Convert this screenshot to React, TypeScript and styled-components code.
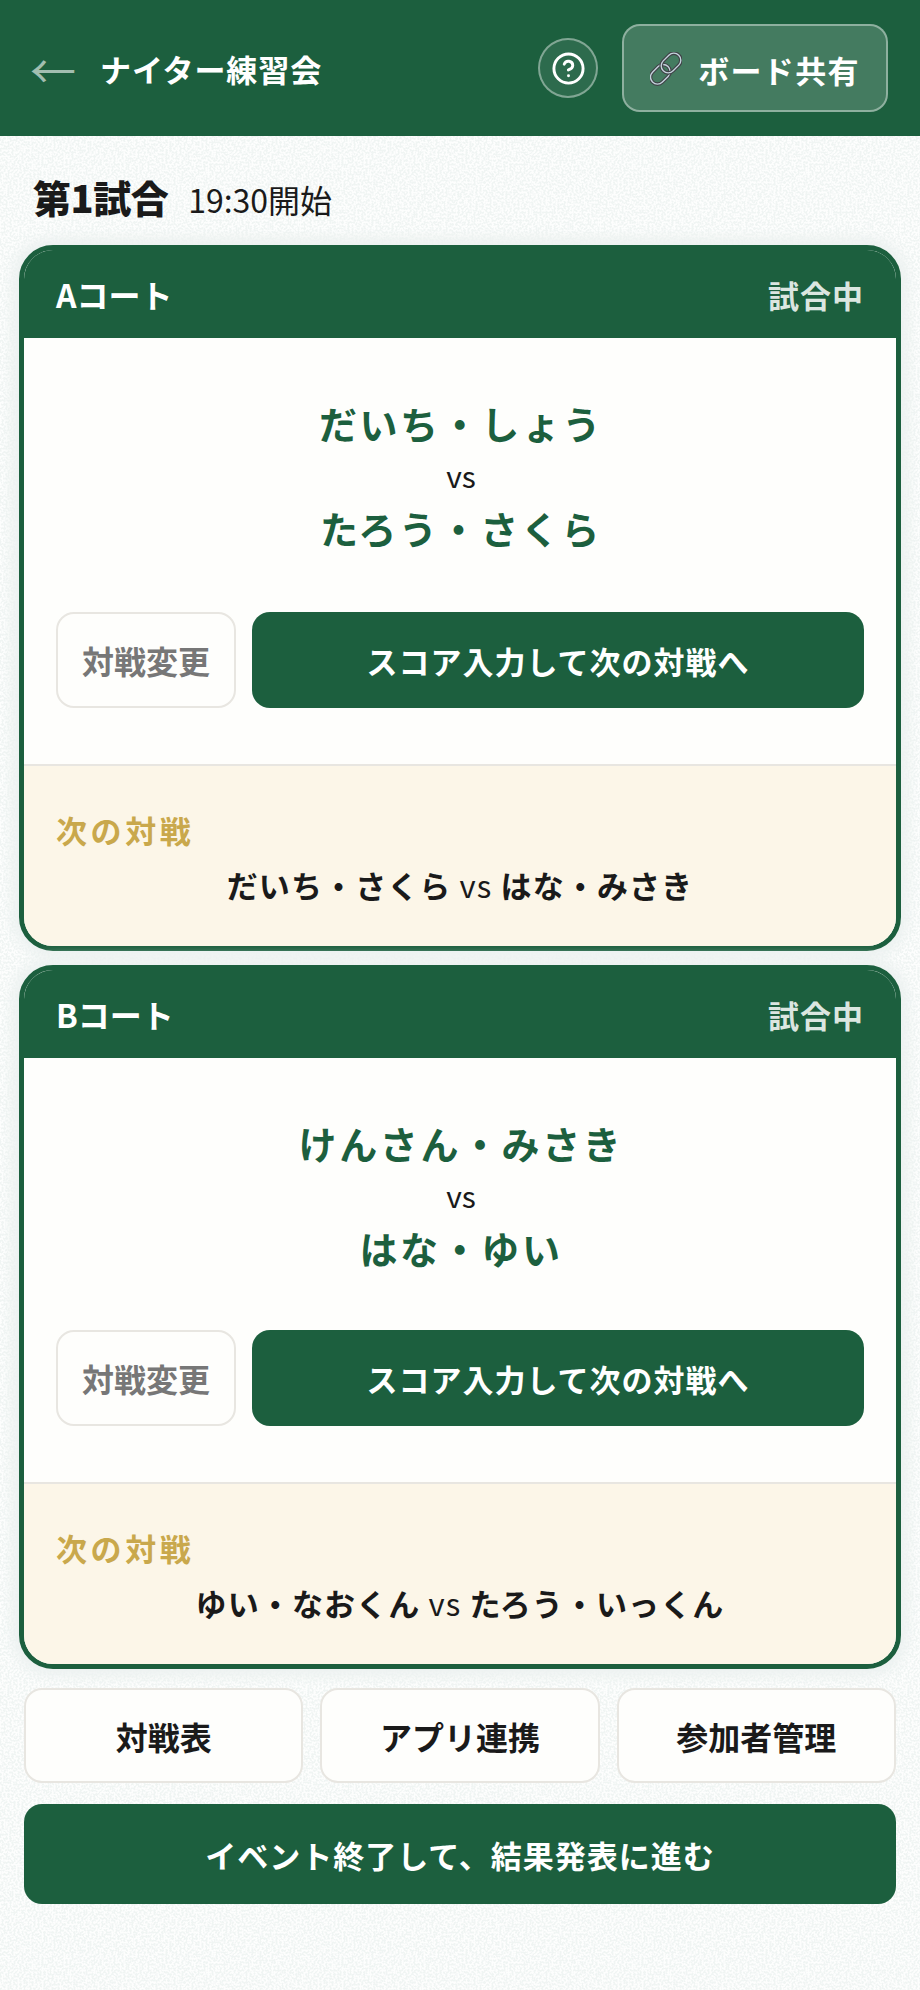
import styled, { createGlobalStyle } from "styled-components";
import { CircleHelp } from "lucide-react";

const GREEN = "#1c5f3e";

const noise = `url("data:image/svg+xml,%3Csvg xmlns='http://www.w3.org/2000/svg' width='300' height='300'%3E%3Cfilter id='n'%3E%3CfeTurbulence type='fractalNoise' baseFrequency='0.5' numOctaves='2' seed='4'/%3E%3CfeColorMatrix values='0 0 0 0 0.87 0 0 0 0 0.91 0 0 0 0 0.9 0 0 0 9 -4.1'/%3E%3C/filter%3E%3Crect width='300' height='300' filter='url(%23n)'/%3E%3C/svg%3E")`;

const GlobalStyle = createGlobalStyle`
    html, body {
        margin: 0;
        padding: 0;
    }
    body {
        background-color: #fdfefd;
        background-image: ${noise};
        font-family: "Noto Sans CJK JP", "Noto Sans", sans-serif;
        color: #1a1a1a;
    }
`

const PageDiv = styled.div`
    width: 920px;
    height: 1990px;
    display: flex;
    flex-direction: column;
    overflow: hidden;
`

const Header = styled.header`
    height: 136px;
    flex: none;
    background: ${GREEN};
    display: flex;
    align-items: center;
    padding: 0 32px 0 30px;
    box-sizing: border-box;
`

const BackArrow = styled.span`
    width: 46px;
    margin-right: 24px;
    font: 400 46px/1 "Noto Sans CJK JP", sans-serif;
    color: rgba(255, 255, 255, 0.6);
`

const Title = styled.h1`
    flex: 1;
    margin: 0;
    font-size: 31px;
    font-weight: 700;
    letter-spacing: 0.9px;
    color: #fff;
`

const HelpButton = styled.div`
    width: 60px;
    height: 60px;
    box-sizing: border-box;
    border: 2px solid rgba(255, 255, 255, 0.4);
    border-radius: 50%;
    background: rgba(255, 255, 255, 0.08);
    display: flex;
    align-items: center;
    justify-content: center;
    color: #fff;
    margin: 0 24px 0 0;
`

const ShareButton = styled.div`
    width: 266px;
    height: 88px;
    box-sizing: border-box;
    border: 2px solid rgba(255, 255, 255, 0.4);
    border-radius: 18px;
    background: rgba(255, 255, 255, 0.18);
    display: flex;
    align-items: center;
    justify-content: center;
    gap: 16px;
    font-size: 31px;
    font-weight: 700;
    letter-spacing: 1.3px;
    color: #fff;
    padding-top: 2px;
`

const RoundHead = styled.div`
    height: 109px;
    flex: none;
    box-sizing: border-box;
    padding: 33px 33px 0;
    display: flex;
    align-items: baseline;
    gap: 20px;
`

const RoundTitle = styled.h2`
    margin: 0;
    font-size: 38px;
    line-height: 56px;
    font-weight: 900;
    letter-spacing: -0.5px;
`

const RoundTime = styled.span`
    font-size: 32px;
    font-weight: 400;
`

const Cards = styled.div`
    display: flex;
    flex-direction: column;
    gap: 14px;
    margin: 0 19px;
`

const Card = styled.section`
    border: 5px solid ${GREEN};
    border-radius: 34px;
    overflow: hidden;
    background: #fefefc;
    box-shadow: 0 0 12px 8px #edf2f1;
`

const CardHead = styled.div`
    height: 88px;
    background: ${GREEN};
    display: flex;
    align-items: center;
    justify-content: space-between;
    padding: 0 32px;
    font-size: 32px;
    font-weight: 700;
    color: #fff;
`

const Status = styled.span`
    color: #dbe6e0;
    font-size: 31px;
    letter-spacing: 1px;
`

const CardBody = styled.div<{ $bottom: number }>`
    padding: 59px 32px 56px;
    display: flex;
    flex-direction: column;
    gap: ${(p) => p.$bottom}px;
`

const Teams = styled.div`
    display: flex;
    flex-direction: column;
    align-items: center;
    padding-left: 2px;
`

const TeamName = styled.div`
    font-size: 38px;
    line-height: 52px;
    font-weight: 700;
    letter-spacing: 2.6px;
    color: ${GREEN};
`

const Vs = styled.div`
    font-size: 30px;
    line-height: 53px;
`

const Actions = styled.div`
    display: flex;
    gap: 16px;
    height: 96px;
`

const ChangeButton = styled.div`
    width: 180px;
    flex: none;
    box-sizing: border-box;
    border: 2px solid #e8e6e1;
    border-radius: 18px;
    background: #fefefc;
    display: flex;
    align-items: center;
    justify-content: center;
    font-size: 32px;
    font-weight: 700;
    color: #777;
`

const PrimaryButton = styled.div`
    flex: 1;
    border-radius: 18px;
    background: ${GREEN};
    display: flex;
    align-items: center;
    justify-content: center;
    font-size: 31px;
    font-weight: 700;
    letter-spacing: 1px;
    color: #fff;
`

const NextPanel = styled.div`
    height: 182px;
    box-sizing: border-box;
    border-top: 2px solid #e8e6e1;
    background: #fcf6e8;
    padding: 38px 32px 0;
`

const NextLabel = styled.div`
    font-size: 31px;
    line-height: 52px;
    font-weight: 700;
    letter-spacing: 3.6px;
    color: #c9a84c;
`

const NextMatch = styled.div`
    text-align: center;
    font-size: 31px;
    line-height: 58px;
    font-weight: 700;
    letter-spacing: 1.1px;
`

const NextVs = styled.span`
    font-weight: 400;
`

const Links = styled.div`
    display: flex;
    gap: 17px;
    margin: 19px 24px 0;
`

const LinkButton = styled.div`
    flex: 1;
    height: 95px;
    box-sizing: border-box;
    border: 2px solid #e8e6e1;
    border-radius: 18px;
    background: #fefefc;
    display: flex;
    align-items: center;
    justify-content: center;
    font-size: 32px;
    font-weight: 700;
`

const FinishButton = styled.div`
    height: 100px;
    margin: 21px 24px 0;
    border-radius: 18px;
    background: ${GREEN};
    display: flex;
    align-items: center;
    justify-content: center;
    font-size: 31px;
    font-weight: 700;
    letter-spacing: 1px;
    color: #fff;
`

function LinkIcon() {
    return (
        <svg width="32" height="34" viewBox="0 0 32 34" fill="none">
            <g transform="rotate(-45 11 23)">
                <rect x="0" y="15" width="22" height="14" rx="7" stroke="#3f4247" strokeWidth="3.6"/>
                <rect x="0" y="15" width="22" height="14" rx="7" stroke="#c4d3dc" strokeWidth="1.4"/>
            </g>
            <g transform="rotate(-45 21 11)">
                <rect x="10" y="4" width="22" height="14" rx="7" stroke="#3f4247" strokeWidth="3.6"/>
                <rect x="10" y="4" width="22" height="14" rx="7" stroke="#c4d3dc" strokeWidth="1.4"/>
            </g>
        </svg>
    )
}

type Court = {
    name: string;
    teamA: string;
    teamB: string;
    nextA: string;
    nextB: string;
    gap: number;
}

const courts: Court[] = [
    {name: "Aコート", teamA: "だいち・しょう", teamB: "たろう・さくら", nextA: "だいち・さくら", nextB: "はな・みさき", gap: 58},
    {name: "Bコート", teamA: "けんさん・みさき", teamB: "はな・ゆい", nextA: "ゆい・なおくん", nextB: "たろう・いっくん", gap: 56},
];

export default function App() {
    return (
        <PageDiv>
            <GlobalStyle/>
            <Header>
                <BackArrow>←</BackArrow>
                <Title>ナイター練習会</Title>
                <HelpButton><CircleHelp size={35} strokeWidth={2}/></HelpButton>
                <ShareButton><LinkIcon/>ボード共有</ShareButton>
            </Header>
            <RoundHead>
                <RoundTitle>第1試合</RoundTitle>
                <RoundTime>19:30開始</RoundTime>
            </RoundHead>
            <Cards>
                {courts.map((c) => (
                    <Card key={c.name}>
                        <CardHead>
                            <span>{c.name}</span>
                            <Status>試合中</Status>
                        </CardHead>
                        <CardBody $bottom={c.gap}>
                            <Teams>
                                <TeamName>{c.teamA}</TeamName>
                                <Vs>vs</Vs>
                                <TeamName>{c.teamB}</TeamName>
                            </Teams>
                            <Actions>
                                <ChangeButton>対戦変更</ChangeButton>
                                <PrimaryButton>スコア入力して次の対戦へ</PrimaryButton>
                            </Actions>
                        </CardBody>
                        <NextPanel>
                            <NextLabel>次の対戦</NextLabel>
                            <NextMatch>{c.nextA} <NextVs>vs</NextVs> {c.nextB}</NextMatch>
                        </NextPanel>
                    </Card>
                ))}
            </Cards>
            <Links>
                <LinkButton>対戦表</LinkButton>
                <LinkButton>アプリ連携</LinkButton>
                <LinkButton>参加者管理</LinkButton>
            </Links>
            <FinishButton>イベント終了して、結果発表に進む</FinishButton>
        </PageDiv>
    )
}
